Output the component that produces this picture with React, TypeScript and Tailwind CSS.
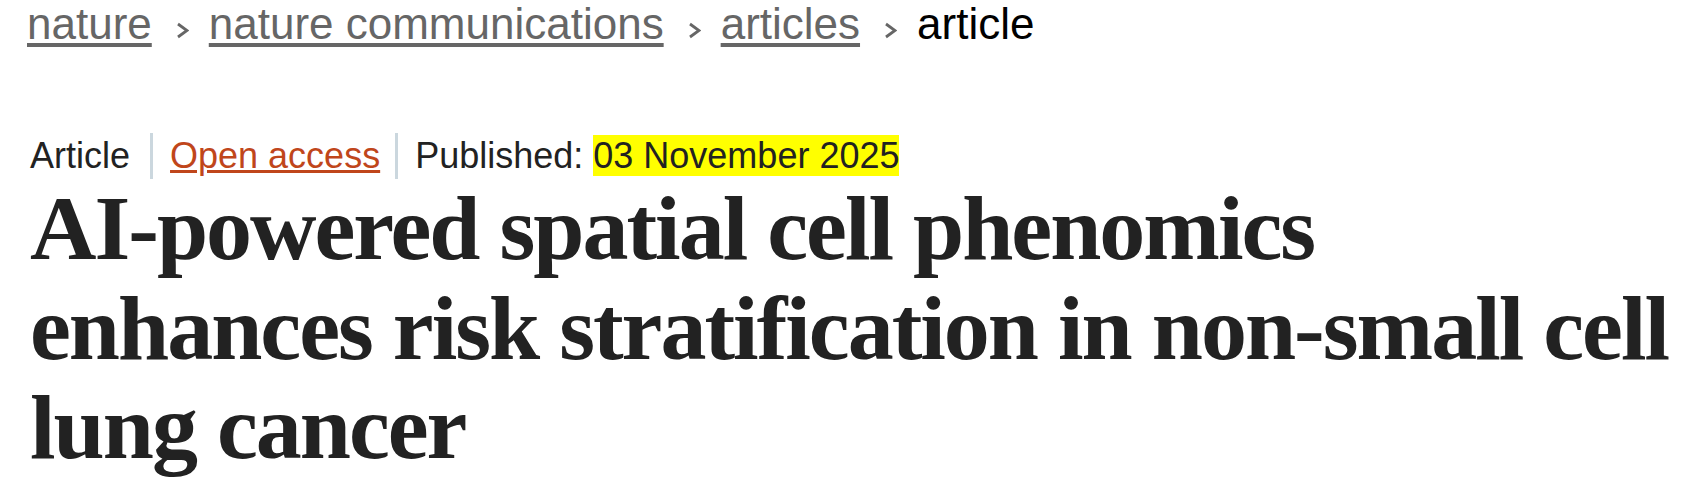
const crumbs = [
  { label: "nature", href: "#" },
  { label: "nature communications", href: "#" },
  { label: "articles", href: "#" },
];

const Chevron = () => (
  <svg
    width="13"
    height="17"
    viewBox="0 0 13 17"
    className="ml-[24px] mr-[20px] shrink-0"
    aria-hidden
  >
    <path d="M2 2 L11 8.5 L2 15" fill="none" stroke="#666" strokeWidth="2.8" />
  </svg>
);

export default function App() {
  return (
    <div className="min-h-screen bg-white pl-[30px] pr-[10px] font-['Liberation_Sans',Arial,sans-serif]">
      <nav aria-label="breadcrumbs">
        <ol className="-ml-[3px] flex items-baseline text-[44px] leading-[48px]">
          {crumbs.map((crumb) => (
            <li key={crumb.label} className="flex items-baseline">
              <a
                href={crumb.href}
                className="text-[#666] underline decoration-[4px] underline-offset-[4px]"
              >
                {crumb.label}
              </a>
              <Chevron />
            </li>
          ))}
          <li className="text-black">article</li>
        </ol>
      </nav>

      <ul className="mt-[85px] flex items-center text-[36px] leading-[46px] text-[#222]">
        <li className="pr-[20px]">Article</li>
        <li className="border-l-[3px] border-[#cbd7de] pl-[17px] pr-[15px]">
          <a
            href="#"
            className="text-[#c0461b] underline decoration-[3px] underline-offset-[2px]"
          >
            Open access
          </a>
        </li>
        <li className="border-l-[3px] border-[#cbd7de] pl-[17px]">
          Published: <time className="bg-[#ffff00]">03 November 2025</time>
        </li>
      </ul>

      <h1 className="font-['Liberation_Serif',Georgia,serif] text-[92px] font-bold leading-[99.5px] tracking-[-2px] text-[#222]">
        AI-powered spatial cell phenomics
        <br />
        enhances risk stratification in non-small cell
        <br />
        lung cancer
      </h1>
    </div>
  );
}
